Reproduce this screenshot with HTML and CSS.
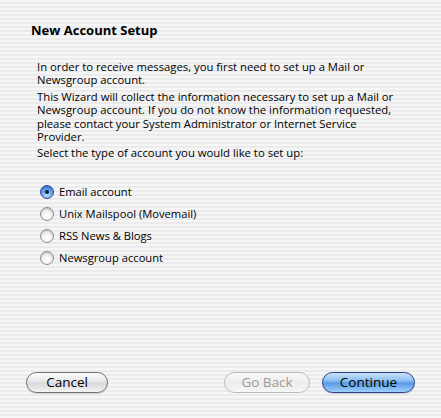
FILE: index.html
```html
<!DOCTYPE html>
<html lang="en">
<head>
  <meta charset="UTF-8" />
  <title>New Account Setup</title>
  <link rel="stylesheet" href="styles.css">
</head>
<body>
  <div class="wizard">
    <h1 class="wizard-title">New Account Setup</h1>

    <div class="intro">
      <p>In order to receive messages, you first need to set up a Mail or<br>Newsgroup account.</p>
      <p>This Wizard will collect the information necessary to set up a Mail or<br>Newsgroup account. If you do not know the information requested,<br>please contact your System Administrator or Internet Service<br>Provider.</p>
      <p>Select the type of account you would like to set up:</p>
    </div>

    <div class="account-types">
      <label class="radio-row"><span class="radio checked"></span>Email account</label>
      <label class="radio-row"><span class="radio"></span>Unix Mailspool (Movemail)</label>
      <label class="radio-row"><span class="radio"></span>RSS News &amp; Blogs</label>
      <label class="radio-row"><span class="radio"></span>Newsgroup account</label>
    </div>

    <div class="button-bar">
      <button class="btn btn-cancel">Cancel</button>
      <div class="button-group">
        <button class="btn btn-back" disabled>Go Back</button>
        <button class="btn btn-continue">Continue</button>
      </div>
    </div>
  </div>
</body>
</html>
```

FILE: styles.css
```css
* {
  margin: 0;
  padding: 0;
  box-sizing: border-box;
}
html, body {
  height: 100%;
}
body {
  font-family: "Open Sans", "DejaVu Sans", sans-serif;
  color: #000;
  background: repeating-linear-gradient(to bottom, #f6f6f6 0, #f6f6f6 2px, #ebebeb 2px, #ebebeb 4px);
}
.wizard {
  height: 418px;
  display: flex;
  flex-direction: column;
  padding: 22px 26px 25px 26px;
}
.wizard-title {
  font-size: 13px;
  font-weight: 700;
  line-height: 16px;
  padding-left: 5px;
}
.intro {
  margin-top: 22px;
  padding-left: 11px;
  font-size: 11.3px;
  line-height: 13.4px;
}
.intro p + p {
  margin-top: 3px;
}
.account-types {
  margin-top: 21px;
  padding-left: 14px;
  display: flex;
  flex-direction: column;
}
.radio-row {
  display: flex;
  align-items: center;
  gap: 5px;
  height: 22px;
  font-size: 11.2px;
}
.radio {
  width: 14px;
  height: 14px;
  border-radius: 50%;
  border: 1px solid #8c8c8c;
  background: radial-gradient(circle at 50% 70%, #ffffff 0, #f2f2f2 45%, #d2d2d2 100%);
  box-shadow: inset 0 1px 1px rgba(0, 0, 0, 0.15);
  position: relative;
}
.radio.checked {
  border-color: #2d4f94;
  background: radial-gradient(circle at 50% 75%, #bfe0ff 0, #6aa6ec 45%, #2f6bcf 100%);
}
.radio.checked::after {
  content: "";
  position: absolute;
  left: 4px;
  top: 4px;
  width: 4px;
  height: 4px;
  border-radius: 50%;
  background: #0c1a33;
}
.button-bar {
  margin-top: auto;
  display: flex;
  justify-content: space-between;
  align-items: center;
}
.button-group {
  display: flex;
  gap: 12px;
}
.btn {
  height: 21px;
  border-radius: 11px;
  font-family: "Open Sans", "DejaVu Sans", sans-serif;
  font-size: 13.5px;
  line-height: 19px;
  color: #000;
  border: 1px solid #6e6e6e;
  background: linear-gradient(to bottom, #fdfdfd 0, #e6e6e6 45%, #d9d9d9 55%, #f4f4f4 100%);
  box-shadow: 0 1px 1px rgba(0, 0, 0, 0.15);
}
.btn-cancel {
  width: 82px;
}
.btn-back {
  width: 86px;
  color: #9a9a9a;
  border-color: #b8b8b8;
  background: linear-gradient(to bottom, #fafafa 0, #ededed 50%, #f6f6f6 100%);
  box-shadow: none;
}
.btn-continue {
  width: 93px;
  border-color: #26408a;
  background: linear-gradient(to bottom, #c9e3fb 0, #8cbef0 40%, #5b9be5 55%, #9fd0fb 100%);
}
```
